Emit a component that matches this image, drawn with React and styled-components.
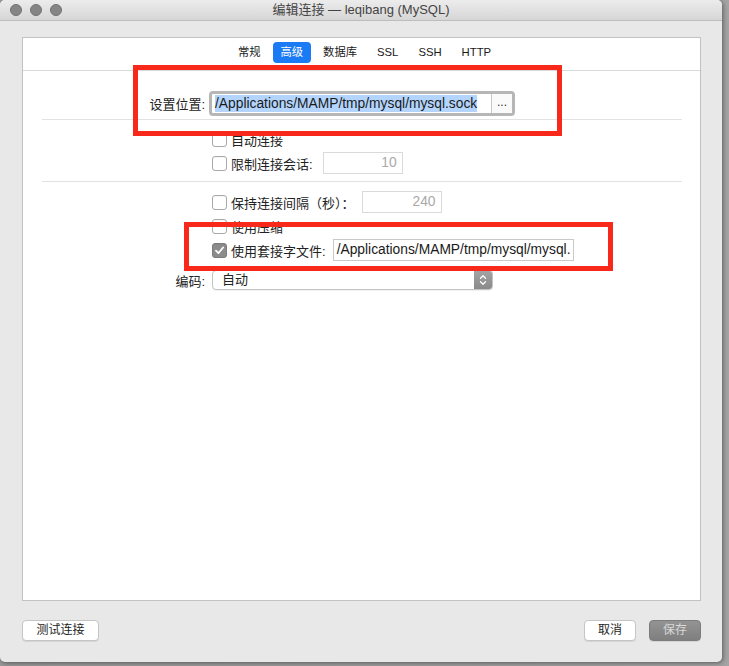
import React from "react";
import styled, { createGlobalStyle } from "styled-components";

const Global = createGlobalStyle`
  html, body { margin: 0; padding: 0; }
  body {
    width: 729px;
    height: 666px;
    overflow: hidden;
    background: linear-gradient(90deg, #9a9a9a 0%, #a4a4a4 100%);
    font-family: "Liberation Sans", "Noto Sans CJK SC", sans-serif;
    color: #222;
  }
  * { box-sizing: border-box; }
`;

const Window = styled.div`
  position: relative;
  width: 722px;
  height: 662px;
  background: #e8e8e8;
  border-radius: 5px;
  box-shadow: 1px 1px 5px rgba(0, 0, 0, 0.45);
  display: flex;
  flex-direction: column;
  overflow: hidden;
`;

const TitleBar = styled.div`
  position: relative;
  height: 21px;
  flex: none;
  background: linear-gradient(#ececec, #d6d6d6);
  border-bottom: 1px solid #bdbdbd;
  display: flex;
  align-items: center;
  padding-left: 10px;
  gap: 8px;
`;

const Light = styled.span`
  width: 12px;
  height: 12px;
  border-radius: 50%;
  background: #858585;
  border: 0.5px solid #727272;
`;

const Title = styled.div`
  position: absolute;
  left: 0;
  right: 0;
  top: 0;
  height: 20px;
  line-height: 20px;
  text-align: center;
  font-size: 13px;
  color: #444;
  pointer-events: none;
`;

const Body = styled.div`
  flex: 1;
  display: flex;
  flex-direction: column;
  padding: 16px 21px 0 22px;
  min-height: 0;
`;

const Panel = styled.div`
  flex: 1;
  background: #fff;
  border: 1px solid #c2c2c2;
  display: flex;
  flex-direction: column;
`;

const TabBar = styled.div`
  height: 33px;
  flex: none;
  padding-top: 4px;
  padding-left: 6px;
  border-bottom: 1px solid #d9d9d9;
  display: flex;
  justify-content: center;
  align-items: flex-start;
  gap: 4px;
`;

const Tab = styled.div`
  height: 21px;
  line-height: 21px;
  padding: 0 8px;
  border-radius: 4px;
  font-size: 11.3px;
  color: ${(p) => (p.$active ? "#fff" : "#1a1a1a")};
  background: ${(p) => (p.$active ? "#1b7bf4" : "transparent")};
`;

const Section = styled.div`
  display: flex;
  flex-direction: column;
  gap: 2px;
  padding: ${(p) => p.$pt}px 0 ${(p) => p.$pb}px;
`;

const Divider = styled.div`
  flex: none;
  height: 1px;
  background: #e2e2e2;
  margin: 0 18px 0 19px;
`;

const Row = styled.div`
  display: grid;
  grid-template-columns: 182px 1fr;
  column-gap: 7px;
  align-items: center;
  height: ${(p) => p.$h || 22}px;
  margin-top: ${(p) => p.$mt || 0}px;
`;

const Label = styled.div`
  text-align: right;
  font-size: 13px;
  color: #222;
  white-space: nowrap;
`;

const Controls = styled.div`
  display: flex;
  align-items: center;
  font-size: 13px;
  white-space: nowrap;
`;

const FocusRing = styled.div`
  margin-left: -3px;
  width: 306px;
  height: 25px;
  border: 3px solid #b6b6b6;
  border-radius: 4px;
  display: flex;
  background: #fff;
`;

const FieldText = styled.div`
  flex: 1;
  overflow: hidden;
  white-space: nowrap;
  font-size: 13.8px;
  line-height: 19px;
  padding-left: 3px;
  color: #1a1a1a;
`;

const Selected = styled.span`
  background: #b3d5fd;
  padding: 1px 0 1px;
`;

const DotsButton = styled.div`
  width: 21px;
  border-left: 1px solid #c9c9c9;
  font-size: 12px;
  line-height: 17px;
  text-align: center;
  color: #333;
  background: #fafafa;
`;

const Box = styled.span`
  flex: none;
  width: 15px;
  height: 15px;
  border-radius: 3px;
  border: 1px solid ${(p) => (p.$checked ? "#7c7c7c" : "#a9a9a9")};
  background: ${(p) => (p.$checked ? "#8c8c8c" : "#fff")};
  box-shadow: inset 0 1px 0 rgba(0, 0, 0, 0.04);
  display: flex;
  align-items: center;
  justify-content: center;
  margin-right: 4px;
`;

const NumInput = styled.div`
  margin-left: ${(p) => p.$ml || 9}px;
  width: 80px;
  height: 22px;
  border: 1px solid #dadada;
  text-align: right;
  padding-right: 5px;
  line-height: 20px;
  font-size: 13.8px;
  color: #a9a9a9;
`;

const TextInput = styled.div`
  margin-left: 7px;
  width: 241px;
  height: 22px;
  border: 1px solid #c9c9c9;
  padding-left: 3px;
  line-height: 20px;
  font-size: 13.8px;
  color: #1a1a1a;
  white-space: nowrap;
`;

const Select = styled.div`
  width: 281px;
  height: 20px;
  border: 1px solid #c3c3c3;
  border-radius: 4px;
  background: #fff;
  display: flex;
  box-shadow: 0 1px 0 rgba(0, 0, 0, 0.05);
  overflow: hidden;
`;

const SelectText = styled.div`
  flex: 1;
  padding-left: 9px;
  font-size: 13px;
  line-height: 18px;
`;

const Stepper = styled.div`
  width: 18px;
  background: linear-gradient(#a3a3a3, #8a8a8a);
  display: flex;
  align-items: center;
  justify-content: center;
`;

const Footer = styled.div`
  height: 61px;
  flex: none;
  display: flex;
  align-items: flex-start;
  padding: 19px 21px 0 22px;
  gap: 13px;
`;

const Button = styled.div`
  height: 21px;
  width: ${(p) => p.$w}px;
  border-radius: 4px;
  border: 1px solid ${(p) => (p.$primary ? "#7c7c7c" : "#c5c5c5")};
  background: ${(p) =>
    p.$primary ? "linear-gradient(#939393, #7f7f7f)" : "#fff"};
  color: ${(p) => (p.$primary ? "#d8d8d8" : "#1e1e1e")};
  font-size: 12px;
  line-height: 19px;
  text-align: center;
  box-shadow: 0 1px 0 rgba(0, 0, 0, 0.08);
`;

const Spacer = styled.div`
  flex: 1;
`;

const Annotation = styled.div`
  position: absolute;
  border: 5px solid #f8291b;
  pointer-events: none;
`;

const Check = ({ checked }) => (
  <Box $checked={checked}>
    {checked && (
      <svg width="11" height="11" viewBox="0 0 10 10">
        <path
          d="M1.8 5.2 L4 7.4 L8.3 2.3"
          fill="none"
          stroke="#fff"
          strokeWidth="1.6"
          strokeLinecap="round"
          strokeLinejoin="round"
        />
      </svg>
    )}
  </Box>
);

const tabs = ["常规", "高级", "数据库", "SSL", "SSH", "HTTP"];

export default function App() {
  return (
    <>
      <Global />
      <Window>
        <TitleBar>
          <Light />
          <Light />
          <Light />
          <Title>编辑连接 — leqibang (MySQL)</Title>
        </TitleBar>
        <Body>
          <Panel>
            <TabBar>
              {tabs.map((t) => (
                <Tab key={t} $active={t === "高级"}>
                  {t}
                </Tab>
              ))}
            </TabBar>
            <Section $pt={20} $pb={8}>
              <Row $h={20}>
                <Label>设置位置:</Label>
                <Controls>
                  <FocusRing>
                    <FieldText>
                      <Selected>/Applications/MAMP/tmp/mysql/mysql.sock</Selected>
                    </FieldText>
                    <DotsButton>...</DotsButton>
                  </FocusRing>
                </Controls>
              </Row>
            </Section>
            <Divider />
            <Section $pt={9} $pb={8}>
              <Row $h={21}>
                <span />
                <Controls>
                  <Check />
                  自动连接
                </Controls>
              </Row>
              <Row $h={21}>
                <span />
                <Controls>
                  <Check />
                  限制连接会话:
                  <NumInput $ml={10}>10</NumInput>
                </Controls>
              </Row>
            </Section>
            <Divider />
            <Section $pt={9} $pb={0}>
              <Row>
                <span />
                <Controls>
                  <Check />
                  保持连接间隔（秒）：
                  <NumInput $ml={7}>240</NumInput>
                </Controls>
              </Row>
              <Row>
                <span />
                <Controls>
                  <Check />
                  使用压缩
                </Controls>
              </Row>
              <Row>
                <span />
                <Controls>
                  <Check checked />
                  使用套接字文件:
                  <TextInput>/Applications/MAMP/tmp/mysql/mysql.</TextInput>
                </Controls>
              </Row>
              <Row $mt={6}>
                <Label>编码:</Label>
                <Controls>
                  <Select>
                    <SelectText>自动</SelectText>
                    <Stepper>
                      <svg width="10" height="14" viewBox="0 0 10 14">
                        <path
                          d="M2.5 5.2 L5 2.7 L7.5 5.2 M2.5 8.8 L5 11.3 L7.5 8.8"
                          fill="none"
                          stroke="#fff"
                          strokeWidth="1.3"
                          strokeLinecap="round"
                          strokeLinejoin="round"
                        />
                      </svg>
                    </Stepper>
                  </Select>
                </Controls>
              </Row>
            </Section>
          </Panel>
        </Body>
        <Footer>
          <Button $w={77}>测试连接</Button>
          <Spacer />
          <Button $w={52}>取消</Button>
          <Button $w={52} $primary>
            保存
          </Button>
        </Footer>
        <Annotation style={{ left: 133, top: 65, width: 429, height: 71 }} />
        <Annotation style={{ left: 184, top: 222, width: 429, height: 49 }} />
      </Window>
    </>
  );
}
